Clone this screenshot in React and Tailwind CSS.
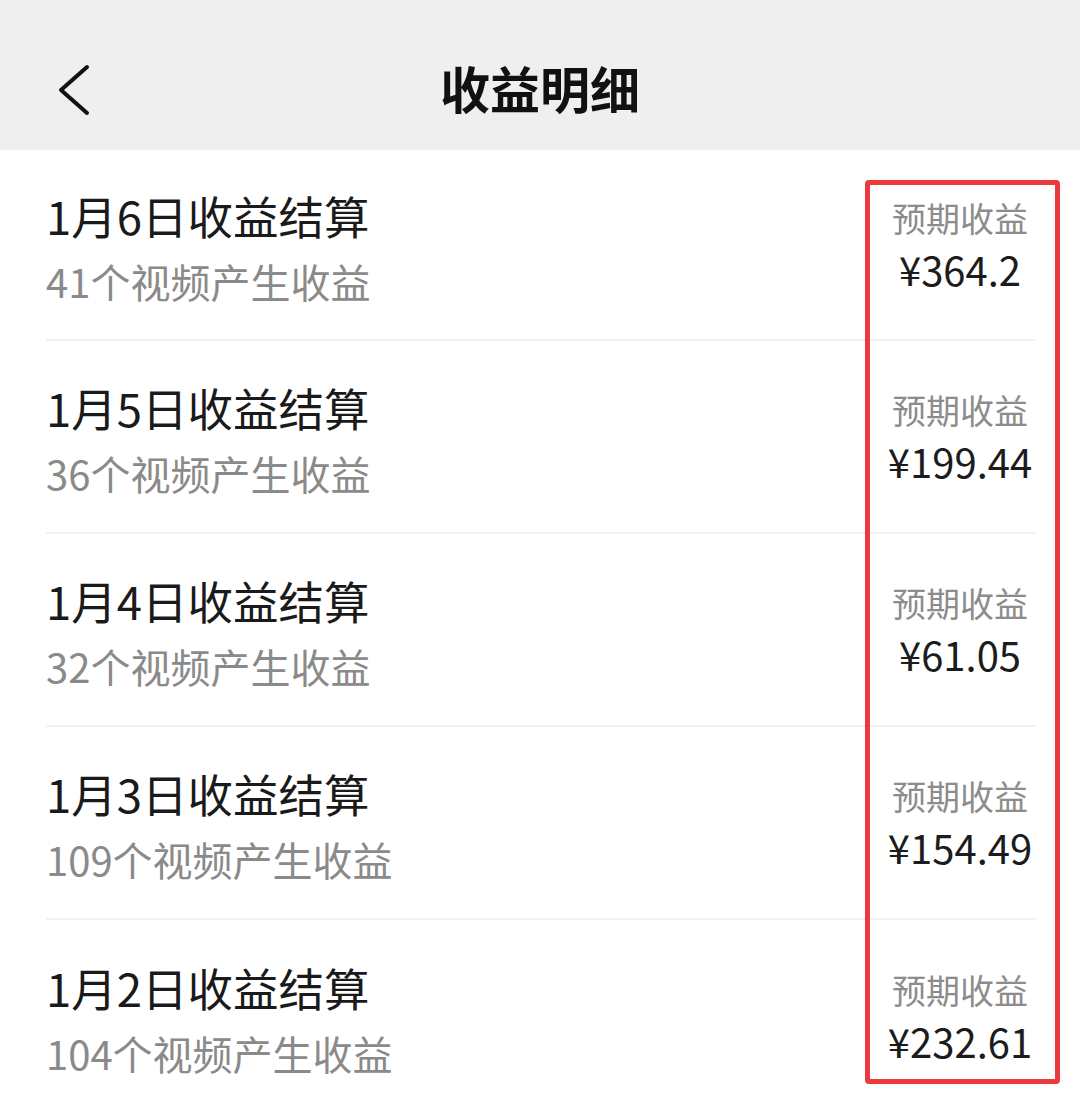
import React from 'react';

const rows = [
  { date: '1月6日收益结算', count: '41个视频产生收益', amount: '¥364.2' },
  { date: '1月5日收益结算', count: '36个视频产生收益', amount: '¥199.44' },
  { date: '1月4日收益结算', count: '32个视频产生收益', amount: '¥61.05' },
  { date: '1月3日收益结算', count: '109个视频产生收益', amount: '¥154.49' },
  { date: '1月2日收益结算', count: '104个视频产生收益', amount: '¥232.61' },
];

const font = { fontFamily: '"Noto Sans CJK SC", "Noto Sans", sans-serif' };

export default function App() {
  return (
    <div className="relative w-[1080px] h-[1111px] bg-white overflow-hidden" style={font}>
      {/* Top nav bar */}
      <header className="relative h-[150px] bg-[#efefef] flex items-center justify-center">
        <button className="absolute left-[56px] top-[63px] w-[36px] h-[54px] flex items-center justify-center">
          <svg width="36" height="54" viewBox="0 0 36 54" fill="none">
            <path d="M31 4 L5 27 L31 50" stroke="#111" strokeWidth="4" strokeLinecap="round" strokeLinejoin="round" />
          </svg>
        </button>
        <h1 className="mt-[24px] text-[50px] leading-none font-bold text-[#111]">收益明细</h1>
      </header>

      {/* Settlement list */}
      <ul className="flex flex-col">
        {rows.map((r, i) => (
          <li
            key={r.date}
            className={`ml-[46px] mr-[44px] flex items-center justify-between ${i === 0 ? 'h-[191px]' : 'h-[193px]'} ${i < rows.length - 1 ? 'border-b-2 border-[#f2f2f2]' : ''}`}
          >
            <div className="flex flex-col pt-[4px]">
              <span className="text-[45.5px] leading-[54px] text-[#1a1a1a]">{r.date}</span>
              <span className="mt-[15px] text-[40px] leading-[48px] text-[#8a8a8a]">{r.count}</span>
            </div>
            <div className="w-[152px] flex flex-col items-center">
              <span className="text-[34px] leading-[40px] text-[#8c8c8c]">预期收益</span>
              <span className="mt-[8px] text-[40px] leading-[46px] text-[#1c1c1c]">{r.amount}</span>
            </div>
          </li>
        ))}
      </ul>

      {/* Red highlight annotation */}
      <div className="absolute left-[865px] top-[180px] w-[195px] h-[904px] border-[5px] border-[#eb3a3e] rounded-[4px] pointer-events-none" />
    </div>
  );
}
